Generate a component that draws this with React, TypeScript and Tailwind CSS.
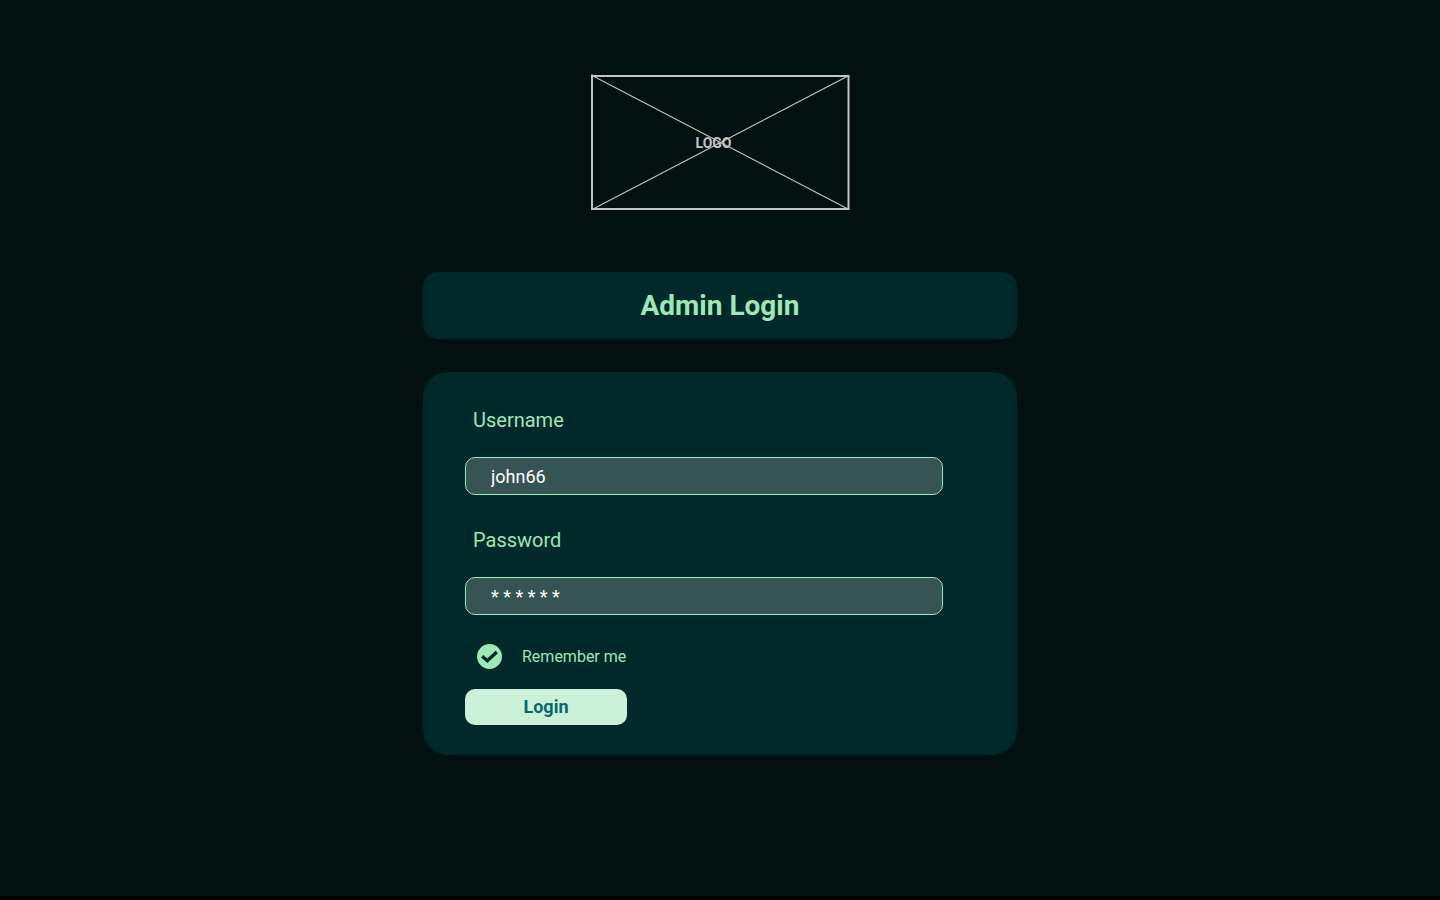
import { useState } from "react";

function Logo() {
  return (
    <div className="relative h-[136px] w-[260px]">
      <svg
        viewBox="0 0 260 136"
        className="block h-full w-full"
        fill="none"
        stroke="#c4c4c4"
        aria-hidden="true"
      >
        <path d="M1 2H259M1 135H259" strokeWidth="2" />
        <path d="M2 0.5V136" strokeWidth="2" />
        <path d="M258.5 1V136" strokeWidth="2" />
        <path d="M3 2L258 135M3 135L258 2" strokeWidth="1.1" />
      </svg>
      <span className="absolute inset-0 flex items-center justify-center pr-[13px] pt-0.5 text-sm leading-4 font-bold text-[#c4c4c4]">
        LOGO
      </span>
    </div>
  );
}

type FieldProps = {
  id: string;
  label: string;
  value: string;
  onChange: (value: string) => void;
};

function Field({ id, label, value, onChange }: FieldProps) {
  return (
    <div className="flex flex-col gap-[25px]">
      <label htmlFor={id} className="pl-2 text-xl leading-6 text-[#9ee7b7]">
        {label}
      </label>
      <input
        id={id}
        type="text"
        autoComplete="off"
        value={value}
        onChange={(event) => onChange(event.target.value)}
        className="h-[38px] w-full rounded-[10px] border border-[#9ee7b7] bg-[#355453] px-[25px] text-lg text-white outline-none"
      />
    </div>
  );
}

function RememberMe() {
  const [checked, setChecked] = useState(true);
  return (
    <label className="flex w-fit cursor-pointer items-center gap-5 pl-3 text-base leading-6 text-[#9ee7b7]">
      <span className="relative block size-[25px]">
        <input
          type="checkbox"
          checked={checked}
          onChange={(event) => setChecked(event.target.checked)}
          className="block size-full cursor-pointer appearance-none rounded-full border-2 border-[#9ee7b7] checked:bg-[#9ee7b7]"
        />
        {checked && (
          <svg
            viewBox="0 0 25 25"
            className="pointer-events-none absolute inset-0 size-full"
            fill="none"
            stroke="#012829"
            strokeWidth="3.4"
            aria-hidden="true"
          >
            <path d="M5.2 12.2L10.4 16.8L19.8 8" />
          </svg>
        )}
      </span>
      Remember me
    </label>
  );
}

export default function App() {
  const [username, setUsername] = useState("john66");
  const [password, setPassword] = useState("* * * * * *");

  return (
    <div className="flex min-h-screen flex-col items-center border-b-4 border-black bg-[#01110f] px-4 pt-[74px] pb-16 font-['Roboto',sans-serif]">
      <Logo />
      <main className="mt-[62px] flex w-full max-w-[594px] flex-col gap-[33px]">
        <h1 className="rounded-[15px] bg-[#012929] py-4 text-center text-[28px] leading-[35px] font-bold text-[#9ee7b7]">
          Admin Login
        </h1>
        <form
          onSubmit={(event) => event.preventDefault()}
          className="rounded-[25px] bg-[#012929] pt-9 pr-[74px] pb-[30px] pl-[42px]"
        >
          <div className="flex flex-col gap-[33px]">
            <Field id="username" label="Username" value={username} onChange={setUsername} />
            <Field id="password" label="Password" value={password} onChange={setPassword} />
          </div>
          <div className="mt-[29px] flex flex-col gap-5">
            <RememberMe />
            <button
              type="submit"
              className="h-9 w-[162px] cursor-pointer rounded-[10px] bg-[#cbf1db] text-lg leading-6 font-bold text-[#076769]"
            >
              Login
            </button>
          </div>
        </form>
      </main>
    </div>
  );
}
